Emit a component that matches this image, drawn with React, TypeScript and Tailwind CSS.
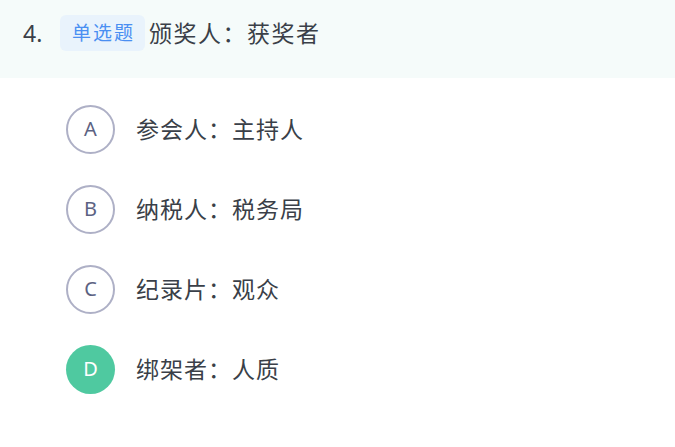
import React from "react";

const options = [
  { key: "A", text: "参会人：主持人", selected: false },
  { key: "B", text: "纳税人：税务局", selected: false },
  { key: "C", text: "纪录片：观众", selected: false },
  { key: "D", text: "绑架者：人质", selected: true },
];

export default function App() {
  return (
    <div
      className="w-[675px] h-[447px] bg-white"
      style={{ fontFamily: '"Noto Sans", "Noto Sans CJK SC", sans-serif' }}
    >
      <div className="h-[78px] bg-[#f5fbfa] flex items-start pt-[15px] pl-[23px]">
        <div className="flex items-center h-[36px]">
          <span className="text-[23px] text-[#3a3f48] w-[37px]">4.</span>
          <span className="h-[36px] pl-[12px] pr-[10px] rounded-[6px] bg-[#e9f3fc] text-[#4a8ff2] text-[19px] tracking-[2px] flex items-center">
            单选题
          </span>
          <span className="ml-[4px] text-[23px] tracking-[1.5px] text-[#3a3f48]">颁奖人：获奖者</span>
        </div>
      </div>
      <div className="pt-[11px] pl-[66px]">
        {options.map((o) => (
          <div key={o.key} className="h-[80px] flex items-center">
            {o.selected ? (
              <div className="w-[49px] h-[49px] rounded-full bg-[#4fc9a0] text-white flex items-center justify-center text-[20px]">
                {o.key}
              </div>
            ) : (
              <div className="w-[49px] h-[49px] rounded-full border-2 border-[#aeb0c6] text-[#5c6282] flex items-center justify-center text-[20px]">
                {o.key}
              </div>
            )}
            <span className="ml-[21px] text-[23px] tracking-[1px] text-[#3a3f48]">{o.text}</span>
          </div>
        ))}
      </div>
    </div>
  );
}
